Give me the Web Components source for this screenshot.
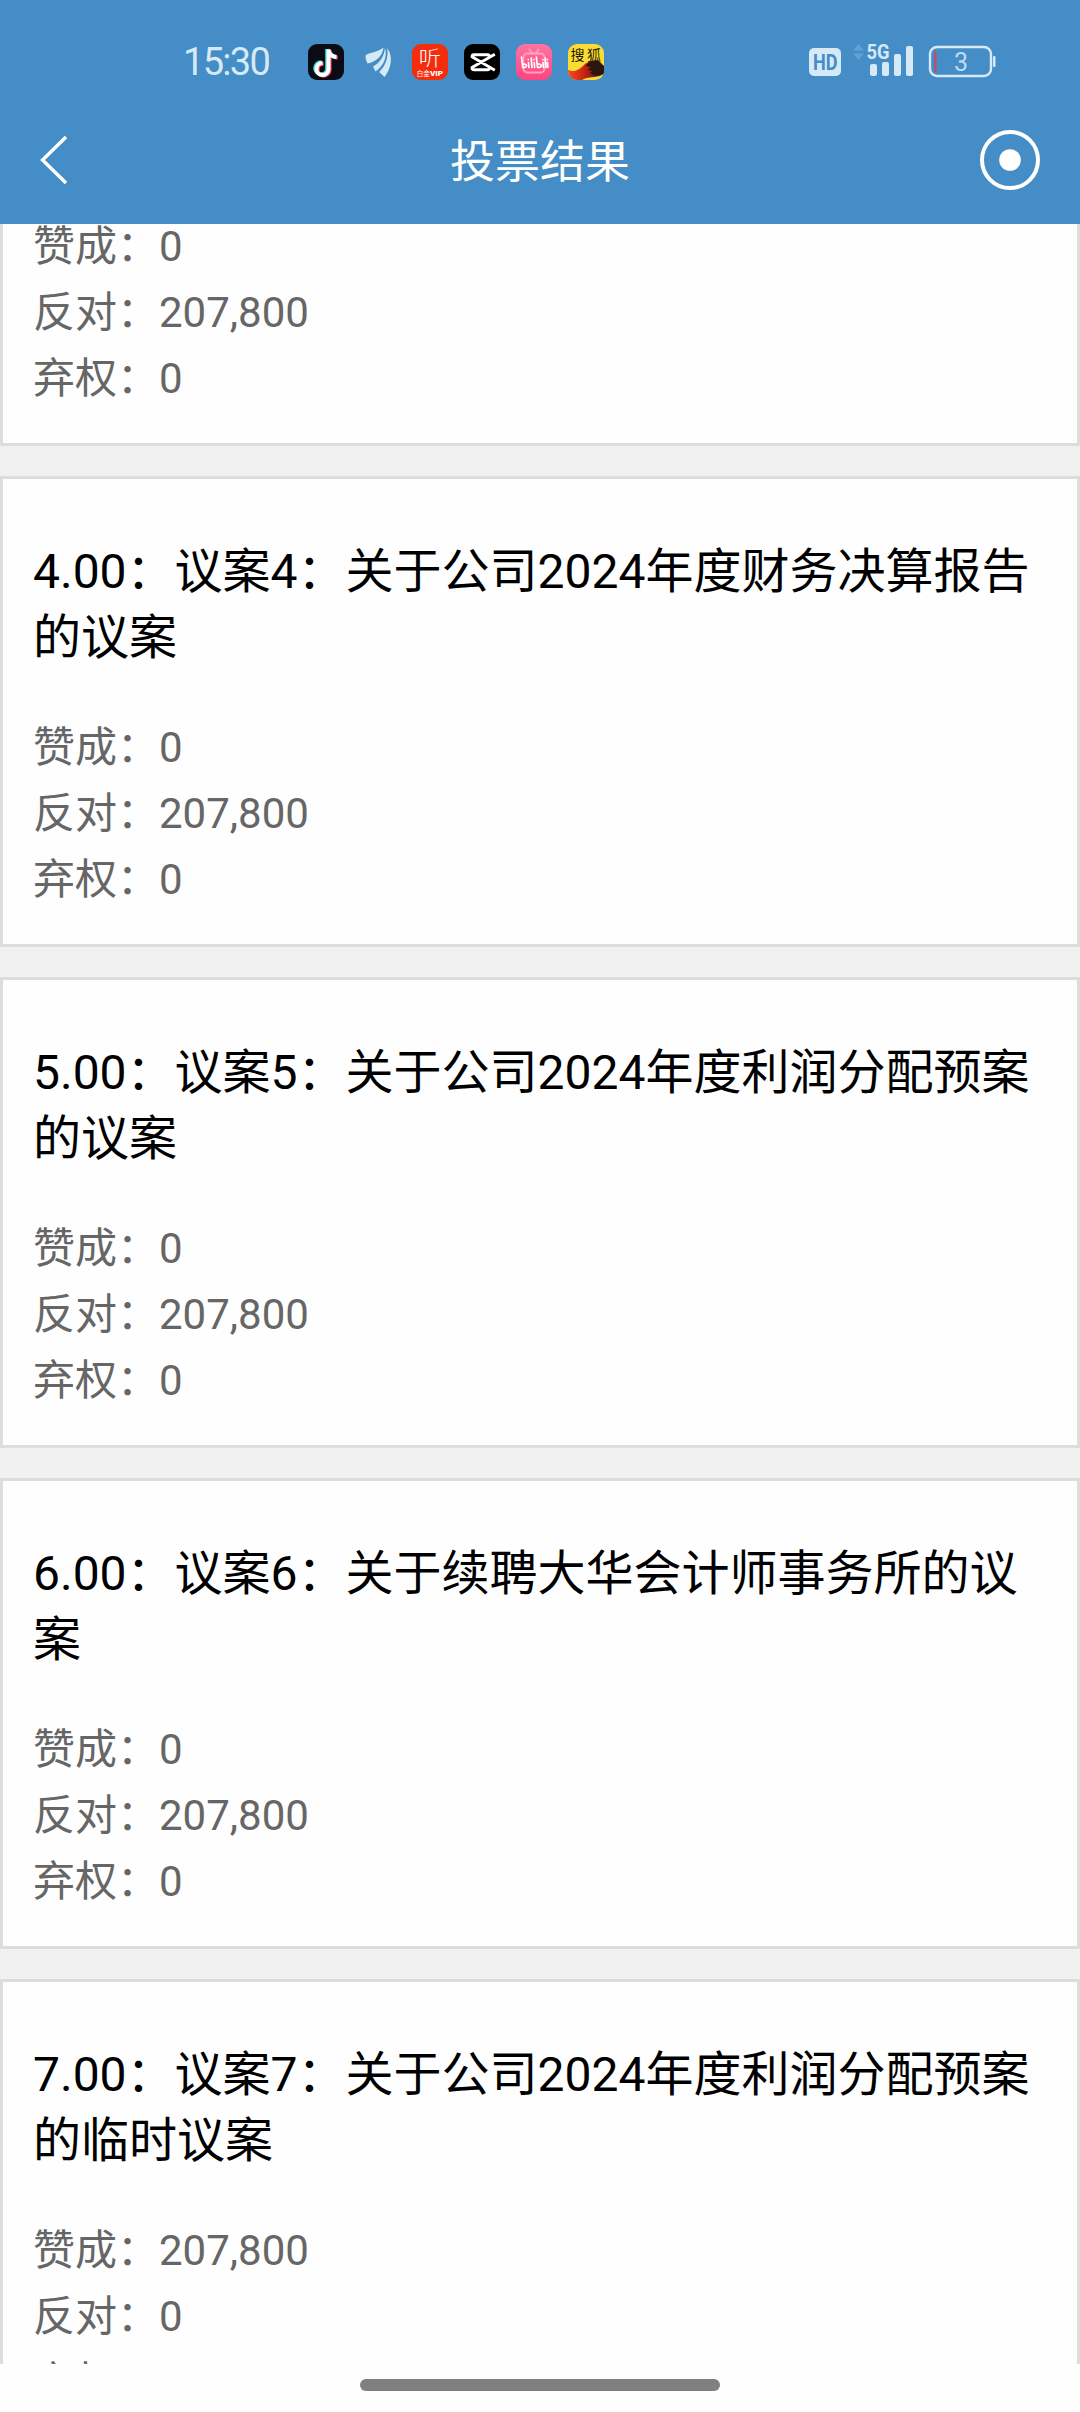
<!DOCTYPE html>
<html lang="zh-CN">
<head>
<meta charset="utf-8">
<title>投票结果</title>
<style>
html,body{margin:0;padding:0}
body{width:1080px;height:2412px;overflow:hidden;background:#fefefe;font-family:Roboto,"Noto Sans CJK SC",sans-serif}
</style>
</head>
<body>
<vote-app></vote-app>
<script>
const define = (name, html, setup) => {
  const t = document.createElement('template');
  t.innerHTML = html;
  customElements.define(name, class extends HTMLElement {
    constructor() {
      super();
      this.attachShadow({ mode: 'open' }).appendChild(t.content.cloneNode(true));
    }
    connectedCallback() { if (setup) setup(this, this.shadowRoot); }
  });
};

define('app-icons', `
<style>
:host{display:flex;gap:16px;align-items:center}
svg{display:block;width:36px;height:36px;flex:none}
</style>
<svg viewBox="0 0 36 36"><rect width="36" height="36" rx="9" fill="#0b0b16"/>
 <g fill="none" stroke-width="4"><path d="M19.200 5v19.200a6 6 0 1 1-6-6M19.200 5c.5 4.5 3.400 7 8 7.400" stroke="#28e0dc"/>
 <path d="M21.600 6.500v19.200a6 6 0 1 1-6-6M21.600 6.500c.5 4.5 3.400 6.800 8 7.200" stroke="#f8405c"/>
 <path d="M20.500 5.500v19.500a6 6 0 1 1-6-6M20.500 5.500c.5 4.700 3.400 7.200 8 7.600" stroke="#fff"/></g></svg>
<svg viewBox="0 0 36 36" fill="#d6e9f7"><path d="M23.500 3.500C17 9 9 8 5.500 11.500c0 3 .7 5.500 2 8C16 18 22.500 12 23.500 3.500z"/><path d="M25 3.800C24 13 20 18.500 13 22.500l2.500 5C23.500 22 27.500 13.500 25 3.800z"/><path d="M27.200 4c1.600 9-1.700 18-8 24l5.300 5C30.500 25.500 34 13 27.200 4z"/></svg>
<svg viewBox="0 0 36 36"><rect width="36" height="36" rx="9" fill="#f52d0c"/>
 <text x="6.800" y="21.500" font-size="20.500" font-weight="300" textLength="22" lengthAdjust="spacingAndGlyphs" fill="#fff" font-family="Noto Sans CJK SC">听</text>
 <text x="4.800" y="32" font-size="6.500" fill="#fff" font-family="Noto Sans CJK SC">白金</text>
 <text x="18" y="32" font-size="7" font-weight="900" textLength="13" lengthAdjust="spacingAndGlyphs" fill="#fff" font-family="Roboto">VIP</text></svg>
<svg viewBox="0 0 36 36"><rect width="36" height="36" rx="9" fill="#000"/>
 <path d="M30.800 10.200L8 23.600v.2q0 1.900 2 1.900h13.500q2 0 2-2v-1M30.800 26.200L8 12.800v-.2q0-1.900 2-1.900h13.500q2 0 2 2v1" fill="none" stroke="#fff" stroke-width="2.900" stroke-linejoin="round"/></svg>
<svg viewBox="0 0 36 36"><defs><linearGradient id="p" x2="0" y2="1"><stop stop-color="#ff74a0"/><stop offset="1" stop-color="#fd4480"/></linearGradient></defs><rect width="36" height="36" rx="9" fill="url(#p)"/>
 <g fill="none" stroke="#ffa3bf" stroke-width="1.800" stroke-linecap="round"><rect x="7.500" y="9.500" width="21" height="19" rx="4"/><path d="M13.500 5.500l3 4M22.500 5.500l-3 4"/></g>
 <g fill="none" stroke="#fff" stroke-width="1.700" stroke-linecap="round"><path d="M5.500 13l1.300 10.500c4.500.3 5-3.500 1-3.500M12.500 18.500l.4 5M15.300 14l.6 9.500M18.300 18.500l.3 5M20.300 13l1.300 10.500c4.500.3 5-3.500 1-3.500M27 18.500l.4 5M29.300 14l.6 9.500M31.500 18.500l.3 5M12.200 15.500v.1M18 15.500v.1M26.700 15.500v.1M31.500 15.500v.1"/></g></svg>
<svg viewBox="0 0 36 36"><defs><clipPath id="c"><rect width="36" height="36" rx="9"/></clipPath><linearGradient id="s"><stop stop-color="#fa4b22"/><stop offset=".45" stop-color="#c62412"/><stop offset="1" stop-color="#28120c"/></linearGradient></defs>
 <g clip-path="url(#c)"><rect width="36" height="36" fill="#fbdc32"/><path d="M0 26c7 3 12-1 17-6 4-3.500 9-3.500 12 1l7 1v7C31 35 22 31 14 36H0z" fill="url(#s)"/><path d="M18 22c3-5 8-6.500 13-5l5 5v8c-6 2-10 2-14-1l3-2-5-1 3-3z" fill="#2c140f"/></g>
 <text x="2.500" y="16" font-size="14" fill="#231a08" font-family="Noto Sans CJK SC">搜</text><text x="19" y="16" font-size="14" fill="#231a08" font-family="Noto Sans CJK SC">狐</text></svg>
`);

define('system-icons', `
<style>:host{display:block}svg{display:block;overflow:visible}</style>
<svg width="190" height="36" viewBox="808 44 190 36" font-family="Roboto">
 <rect x="809" y="48" width="32" height="28" rx="5" fill="#d6e9f7"/>
 <text x="813" y="69.800" font-size="22" font-weight="700" textLength="24.500" lengthAdjust="spacingAndGlyphs" fill="#448dc6">HD</text>
 <path d="M853 50.500l5.500-6.500 5.500 6.500zM853 53.500l5.500 6.500 5.500-6.500z" fill="#62a1d2"/>
 <text x="866.500" y="59.300" font-size="20.500" font-weight="700" textLength="23" lengthAdjust="spacingAndGlyphs" fill="#d6e9f7">5G</text>
 <g fill="#d6e9f7"><rect x="870" y="64" width="7" height="12" rx="2"/><rect x="882" y="62" width="7" height="14" rx="2"/><rect x="894" y="54" width="7" height="22" rx="2"/><rect x="906" y="46" width="7" height="30" rx="2"/><rect x="993" y="56" width="2.500" height="11" rx="1"/></g>
 <rect x="930" y="47" width="61" height="29" rx="7" fill="none" stroke="#d6e9f7" stroke-width="2.400"/>
 <rect x="934" y="51" width="2.500" height="21" fill="#b9516e"/>
 <text x="961" y="71" font-size="25" text-anchor="middle" fill="#bcdcf3">3</text>
</svg>
`);

define('status-bar', `
<style>
:host{display:flex;height:124px;box-sizing:border-box;padding:44px 82px 44px 183px;align-items:center;color:#d6e9f7}
time{font-size:38px;line-height:36px;letter-spacing:-1.7px;width:125px;white-space:nowrap}
system-icons{margin-left:auto}
</style>
<time>15:30</time><app-icons></app-icons><system-icons></system-icons>
`);

define('nav-bar', `
<style>
:host{display:grid;grid-template-columns:1fr auto 1fr;align-items:center;height:72px;padding:0 38px}
h1{margin:6px 0 0;font-weight:400;font-size:45px;line-height:66px;color:#fff}
svg{display:block}
.more{justify-self:end}
</style>
<svg width="32" height="56" viewBox="38 132 32 56"><path d="M66 137L42.500 160l23.500 23" fill="none" stroke="#fff" stroke-width="3.400"/></svg>
<h1><slot></slot></h1>
<svg class="more" width="64" height="64" viewBox="978 128 64 64"><circle cx="1010" cy="160" r="28" fill="none" stroke="#fff" stroke-width="4"/><circle cx="1010" cy="160" r="10.800" fill="#fff"/></svg>
`);

define('vote-card', `
<style>
:host{display:block;box-sizing:border-box;border:3px solid #ddd;background:#fefefe;padding:60px 30px 31px;flex:none}
:host([continued]){border-top:0;padding-top:0}
:host([continued]) h2{display:none}
h2{margin:0 0 44px;font-weight:400;font-size:48px;line-height:66px;color:#000;text-spacing-trim:space-all}
dl{margin:0;font-size:42px;line-height:66px;color:#666}
dl div{display:flex}
dd{margin:0}
dt{text-spacing-trim:space-all}
</style>
<h2><slot></slot></h2>
<dl>
 <div><dt>赞成：</dt><dd class="yes"></dd></div>
 <div><dt>反对：</dt><dd class="no"></dd></div>
 <div><dt>弃权：</dt><dd class="skip"></dd></div>
</dl>
`, (el, root) => {
  for (const k of ['yes', 'no', 'skip']) root.querySelector('.' + k).textContent = el.getAttribute(k) || '0';
});

define('home-indicator', `
<style>:host{display:flex;justify-content:center;height:48px;box-sizing:border-box;padding-top:15px;background:#fefefe}i{width:360px;height:12px;border-radius:6px;background:#808080}</style><i></i>
`);

define('vote-app', `
<style>
:host{display:flex;flex-direction:column;height:2412px;width:1080px}
header{background:#448dc6;height:224px;flex:none}
main{flex:1;min-height:0;overflow:hidden;background:#f1f1f1}
.list{display:flex;flex-direction:column;gap:30px;margin-top:-10px}
</style>
<header><status-bar></status-bar><nav-bar>投票结果</nav-bar></header>
<main><div class="list">
<vote-card continued no="207,800"></vote-card>
<vote-card no="207,800">4.00：议案4：关于公司2024年度财务决算报告的议案</vote-card>
<vote-card no="207,800">5.00：议案5：关于公司2024年度利润分配预案的议案</vote-card>
<vote-card no="207,800">6.00：议案6：关于续聘大华会计师事务所的议案</vote-card>
<vote-card yes="207,800">7.00：议案7：关于公司2024年度利润分配预案的临时议案</vote-card>
</div></main>
<home-indicator></home-indicator>
`);
</script>
</body>
</html>
